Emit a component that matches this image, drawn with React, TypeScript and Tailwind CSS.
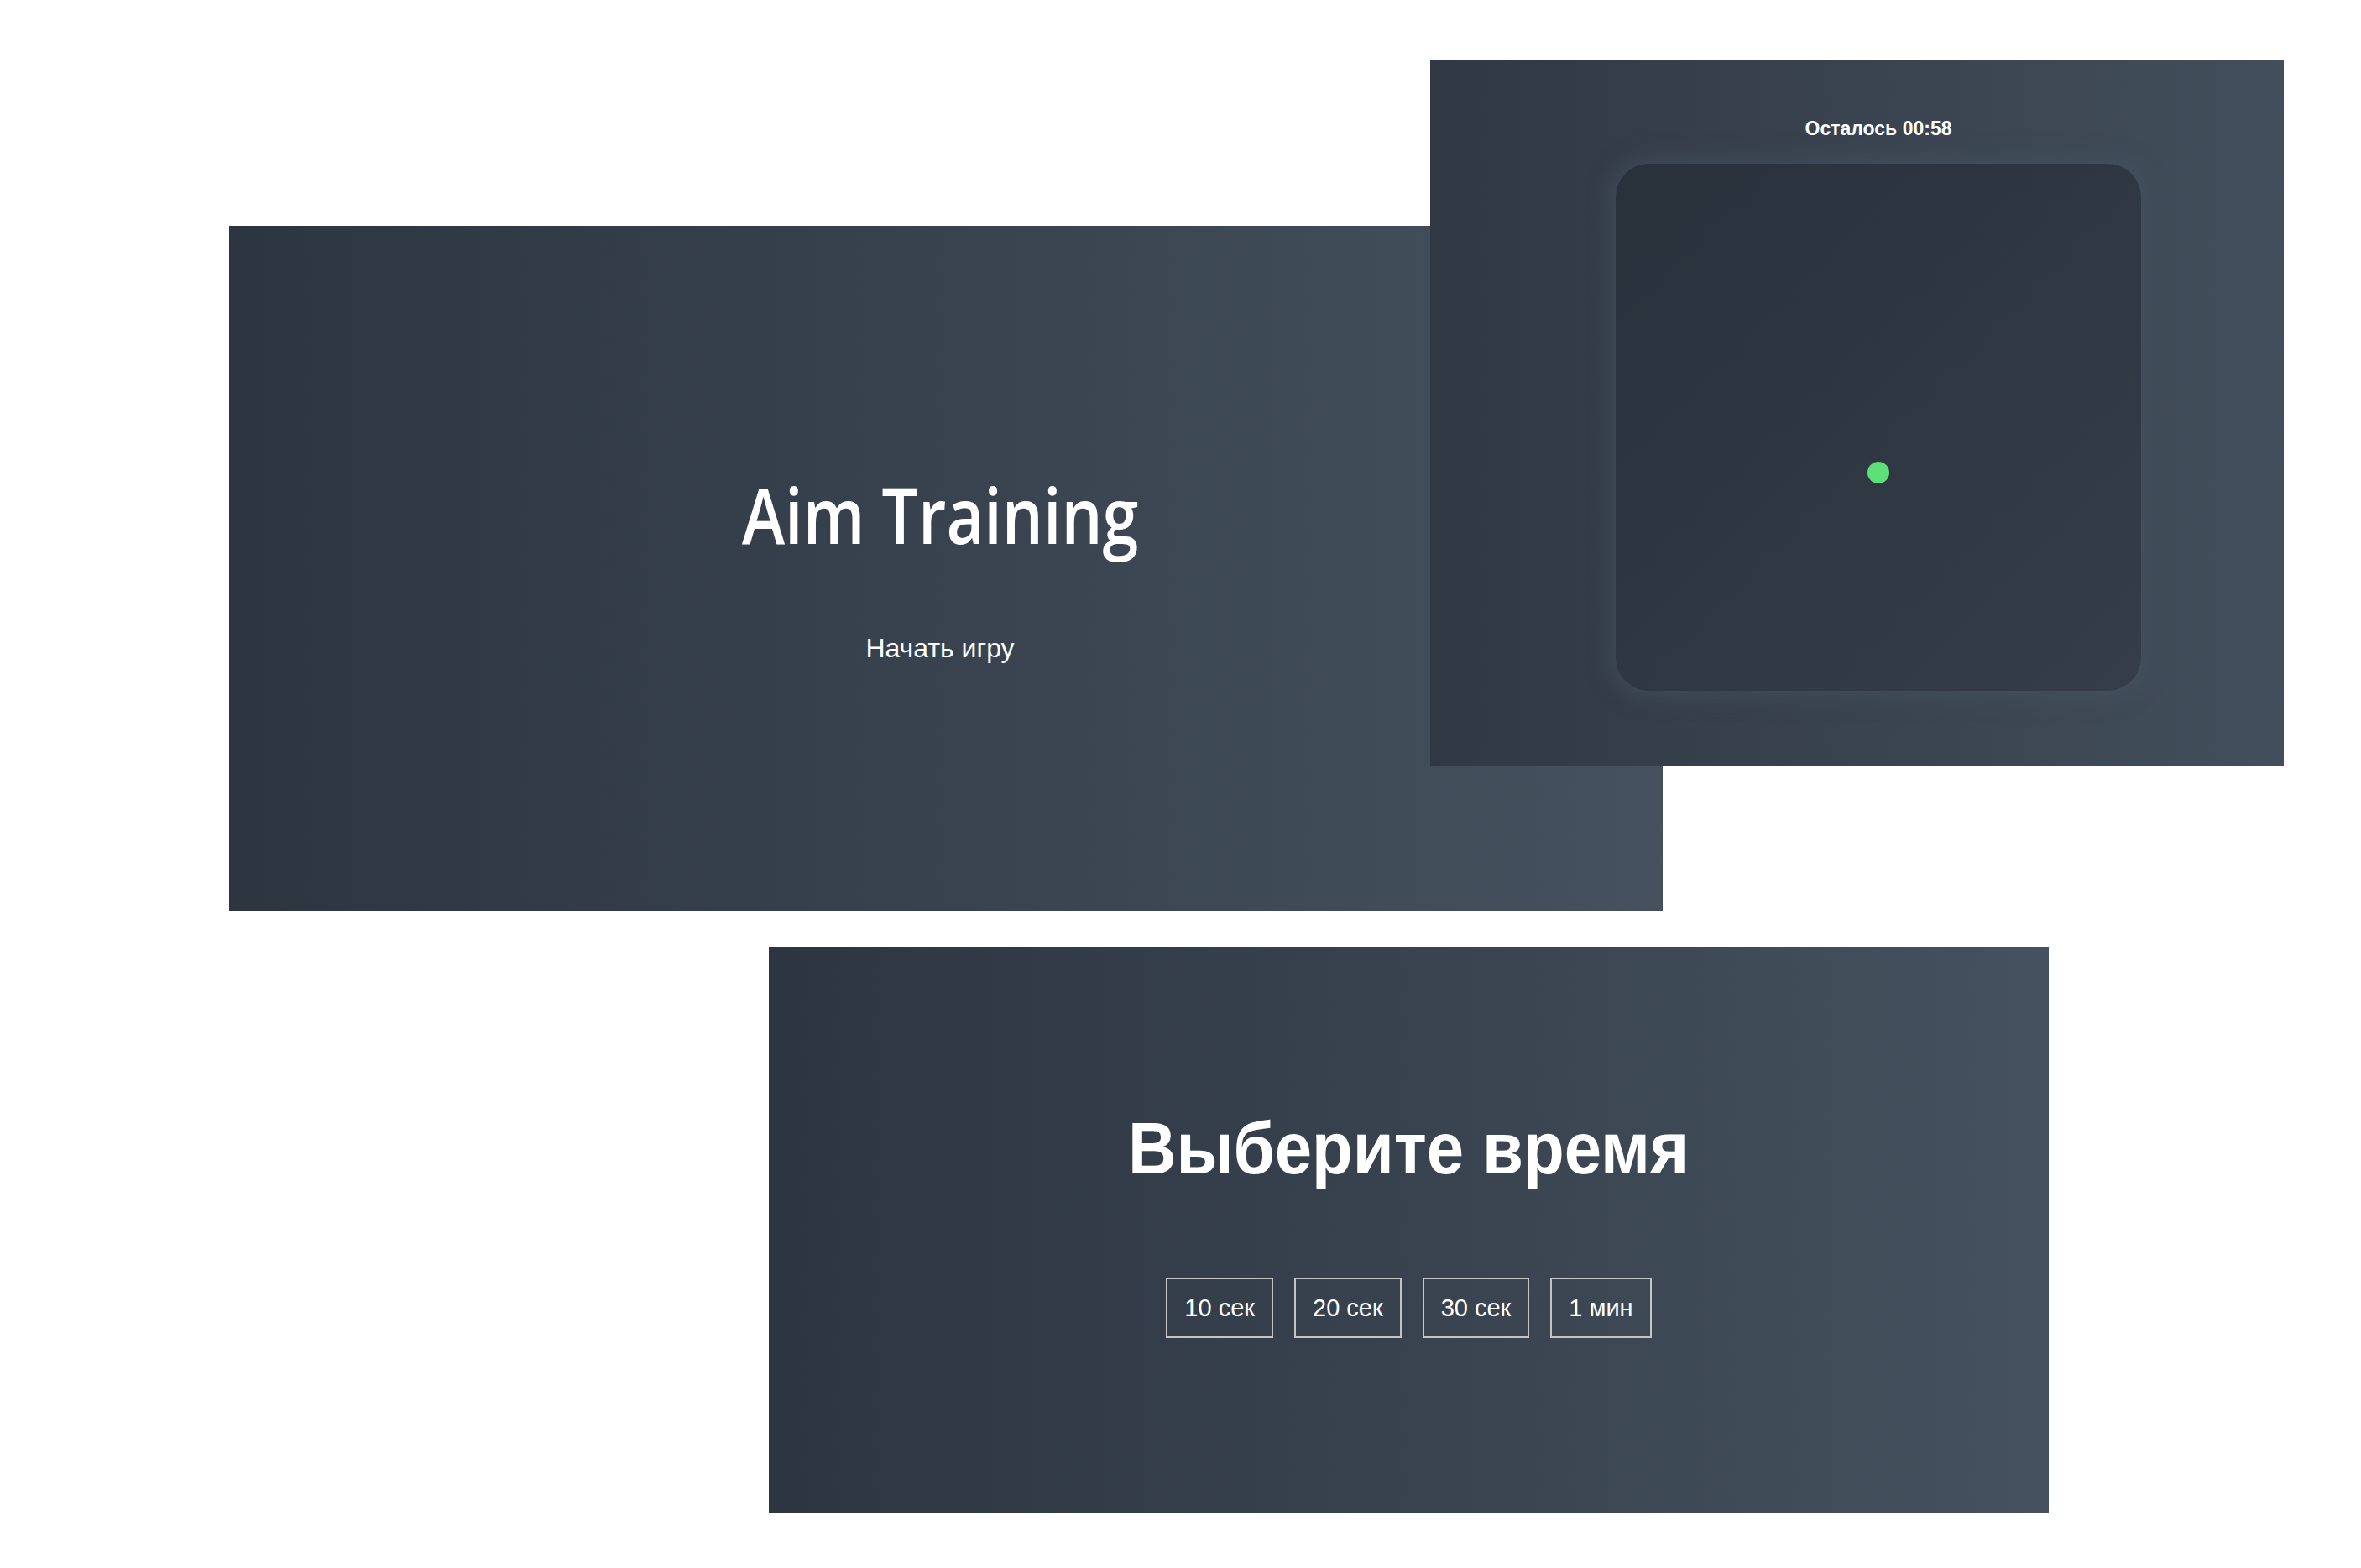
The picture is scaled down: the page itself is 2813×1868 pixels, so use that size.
import React from "react";

const times = ["10 сек", "20 сек", "30 сек", "1 мин"];

export default function App() {
  return (
    <div className="relative w-[2813px] h-[1868px] bg-white overflow-hidden">
      {/* Start screen */}
      <div className="absolute left-[273px] top-[269px] w-[1708px] h-[816px] bg-linear-to-r from-[#2c3540] to-[#46515f] flex flex-col items-center pr-[14px]">
        <h1
          className="mt-[298px] text-[92px] leading-none text-white font-semibold scale-x-[0.84]"
          style={{ fontFamily: '"Open Sans", sans-serif' }}
        >
          Aim Training
        </h1>
        <a
          className="mt-[97px] text-[32px] leading-none text-white"
          style={{ fontFamily: '"Liberation Sans", Arial, sans-serif' }}
        >
          Начать игру
        </a>
      </div>

      {/* Game screen */}
      <div className="absolute left-[1704px] top-[72px] w-[1017px] h-[841px] bg-linear-to-r from-[#303843] to-[#434e5c]">
        <div className="ml-[223px] w-[622px] flex flex-col items-center">
          <h3
            className="mt-[70px] text-[23px] leading-none font-bold text-white"
            style={{ fontFamily: '"Liberation Sans", Arial, sans-serif' }}
          >
            Осталось 00:58
          </h3>
          <div className="relative mt-[30px] w-[626px] h-[628px] rounded-[40px] bg-linear-to-br from-[#29313b] to-[#343d49] shadow-[0_0_26px_6px_rgba(72,85,99,0.6)]">
            <div className="absolute left-[300px] top-[355px] w-[26px] h-[26px] rounded-full bg-[#5ce077]" />
          </div>
        </div>
      </div>

      {/* Time select screen */}
      <div className="absolute left-[916px] top-[1128px] w-[1525px] h-[675px] bg-linear-to-r from-[#2c3540] to-[#46515f] flex flex-col items-center">
        <h1
          className="mt-[196px] text-[88px] leading-none font-bold text-white scale-x-[0.905]"
          style={{ fontFamily: '"Liberation Sans", Arial, sans-serif' }}
        >
          Выберите время
        </h1>
        <ul className="mt-[110px] flex gap-[25px]">
          {times.map((t) => (
            <li key={t}>
              <button
                className="h-[72px] px-[20px] border-2 border-[#c4c4c4] text-white text-[29px] leading-none"
                style={{ fontFamily: '"Liberation Sans", Arial, sans-serif' }}
              >
                {t}
              </button>
            </li>
          ))}
        </ul>
      </div>
    </div>
  );
}
